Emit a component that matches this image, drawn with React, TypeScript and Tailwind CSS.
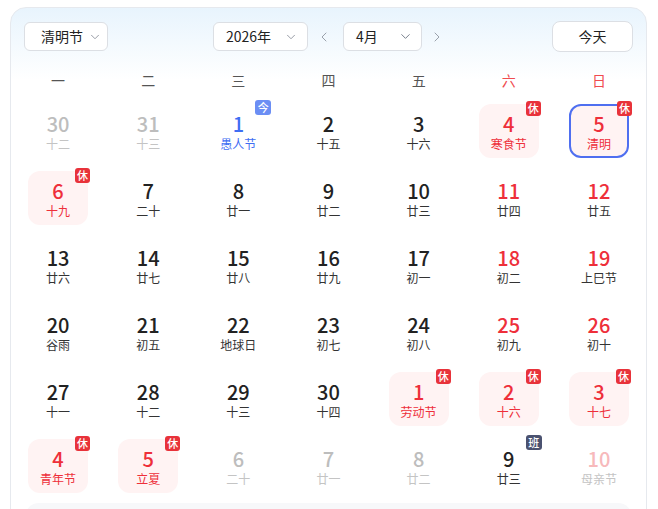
import { ChevronDown, ChevronLeft, ChevronRight } from "lucide-react"

type Day = {
  n: number
  lunar: string
  kind?: "other" | "weekend" | "today" | "holiday" | "work" | "otherWeekend"
  selected?: boolean
}

const weeks: Day[][] = [
  [
    { n: 30, lunar: "十二", kind: "other" },
    { n: 31, lunar: "十三", kind: "other" },
    { n: 1, lunar: "愚人节", kind: "today" },
    { n: 2, lunar: "十五" },
    { n: 3, lunar: "十六" },
    { n: 4, lunar: "寒食节", kind: "holiday" },
    { n: 5, lunar: "清明", kind: "holiday", selected: true },
  ],
  [
    { n: 6, lunar: "十九", kind: "holiday" },
    { n: 7, lunar: "二十" },
    { n: 8, lunar: "廿一" },
    { n: 9, lunar: "廿二" },
    { n: 10, lunar: "廿三" },
    { n: 11, lunar: "廿四", kind: "weekend" },
    { n: 12, lunar: "廿五", kind: "weekend" },
  ],
  [
    { n: 13, lunar: "廿六" },
    { n: 14, lunar: "廿七" },
    { n: 15, lunar: "廿八" },
    { n: 16, lunar: "廿九" },
    { n: 17, lunar: "初一" },
    { n: 18, lunar: "初二", kind: "weekend" },
    { n: 19, lunar: "上巳节", kind: "weekend" },
  ],
  [
    { n: 20, lunar: "谷雨" },
    { n: 21, lunar: "初五" },
    { n: 22, lunar: "地球日" },
    { n: 23, lunar: "初七" },
    { n: 24, lunar: "初八" },
    { n: 25, lunar: "初九", kind: "weekend" },
    { n: 26, lunar: "初十", kind: "weekend" },
  ],
  [
    { n: 27, lunar: "十一" },
    { n: 28, lunar: "十二" },
    { n: 29, lunar: "十三" },
    { n: 30, lunar: "十四" },
    { n: 1, lunar: "劳动节", kind: "holiday" },
    { n: 2, lunar: "十六", kind: "holiday" },
    { n: 3, lunar: "十七", kind: "holiday" },
  ],
  [
    { n: 4, lunar: "青年节", kind: "holiday" },
    { n: 5, lunar: "立夏", kind: "holiday" },
    { n: 6, lunar: "二十", kind: "other" },
    { n: 7, lunar: "廿一", kind: "other" },
    { n: 8, lunar: "廿二", kind: "other" },
    { n: 9, lunar: "廿三", kind: "work" },
    { n: 10, lunar: "母亲节", kind: "otherWeekend" },
  ],
]

const weekdays = ["一", "二", "三", "四", "五", "六", "日"]

function DayCell({ day }: { day: Day }) {
  const k = day.kind
  let num = "text-[#222222]"
  let lunar = "text-[#333333]"
  if (k === "other") {
    num = "text-[#bdbdbd]"
    lunar = "text-[#c4c4c4]"
  } else if (k === "otherWeekend") {
    num = "text-[#f7b9bb]"
    lunar = "text-[#c4c4c4]"
  } else if (k === "weekend") {
    num = "text-[#ee2f3a]"
  } else if (k === "today") {
    num = "text-[#3f6ef3]"
    lunar = "text-[#3f6ef3]"
  } else if (k === "holiday") {
    num = "text-[#ee2f3a]"
    lunar = "text-[#ee2f3a]"
  }

  return (
    <div className="flex justify-center">
      <div
        className={
          "relative flex h-[54px] w-[60px] flex-col items-center rounded-[12px] " +
          (k === "holiday" ? "bg-[#fff3f3] " : "") +
          (day.selected ? "border-2 border-[#4f6ff0] pt-[6px]" : "pt-[8px]")
        }
      >
        <span className={"text-[20px] font-medium leading-[24px] " + num}>{day.n}</span>
        <span className={"text-[12px] leading-[16px] " + lunar}>{day.lunar}</span>
        {k === "holiday" && (
          <span className={"absolute flex h-[15px] w-[15px] items-center justify-center rounded-[3px] bg-[#e8323a] text-[11px] leading-none font-medium text-white " + (day.selected ? "left-[46px] top-[-5px]" : "left-[47px] top-[-3px]")}>
            休
          </span>
        )}
        {k === "today" && (
          <span className="absolute left-[47px] top-[-4px] flex h-[15px] w-[16px] items-center justify-center rounded-[3px] bg-[#6b8ef4] text-[11px] leading-none font-medium text-white">
            今
          </span>
        )}
        {k === "work" && (
          <span className="absolute left-[47px] top-[-4px] flex h-[15px] w-[16px] items-center justify-center rounded-[3px] bg-[#4b5270] text-[11px] leading-none font-medium text-white">
            班
          </span>
        )}
      </div>
    </div>
  )
}

export default function App() {
  return (
    <div className="h-[509px] overflow-hidden bg-white pt-[7px] font-['Noto_Sans_CJK_SC','Noto_Sans',sans-serif]">
      <div className="ml-[10px] w-[637px] rounded-t-[16px] border border-[#e6e9ee] bg-[linear-gradient(to_bottom,#e8f4fd_0px,#ffffff_72px)]">
        <div className="flex items-center px-[13px] pt-[13px]">
          <button className="flex h-[29px] w-[84px] items-center rounded-[6px] border border-[#dcdfe4] bg-white pl-[16px] text-[14px] text-[#222222]">
            清明节
            <ChevronDown className="ml-[5px] h-[14px] w-[14px] text-[#8a8f99]" strokeWidth={1.5} />
          </button>
          <div className="ml-[105px] flex items-center">
            <button className="flex h-[29px] w-[95px] items-center justify-between rounded-[6px] border border-[#dcdfe4] bg-white pl-[12px] pr-[9px] text-[14px] text-[#222222]">
              2026年
              <ChevronDown className="h-[14px] w-[14px] text-[#8a8f99]" strokeWidth={1.5} />
            </button>
            <span className="flex w-[35px] justify-center">
              <ChevronLeft className="mr-[3px] h-[16px] w-[16px] text-[#9aa1ab]" strokeWidth={1.5} />
            </span>
            <button className="flex h-[29px] w-[79px] items-center justify-between rounded-[6px] border border-[#dcdfe4] bg-white pl-[12px] pr-[8px] text-[14px] text-[#222222]">
              4月
              <ChevronDown className="h-[15px] w-[15px] text-[#6f7784]" strokeWidth={1.5} />
            </button>
            <span className="flex w-[30px] justify-center">
              <ChevronRight className="h-[16px] w-[16px] text-[#9aa1ab]" strokeWidth={1.5} />
            </span>
          </div>
          <button className="ml-auto flex h-[31px] w-[81px] items-center justify-center rounded-[8px] border border-[#dcdfe4] bg-white text-[14px] text-[#222222]">
            今天
          </button>
        </div>

        <div className="mt-[12px] grid h-[32px] grid-cols-7 items-center px-[2px] text-[14px]">
          {weekdays.map((w, i) => (
            <span key={w} className={"text-center " + (i >= 5 ? "text-[#f04b4f]" : "text-[#555555]")}>
              {w}
            </span>
          ))}
        </div>

        <div className="mt-[8px] grid grid-cols-7 gap-y-[13px] px-[2px]">
          {weeks.flat().map((d, i) => (
            <DayCell key={i} day={d} />
          ))}
        </div>

        <div className="mx-[14px] mt-[10px] h-[80px] rounded-t-[14px] bg-[#f7f8fa]" />
      </div>
    </div>
  )
}
